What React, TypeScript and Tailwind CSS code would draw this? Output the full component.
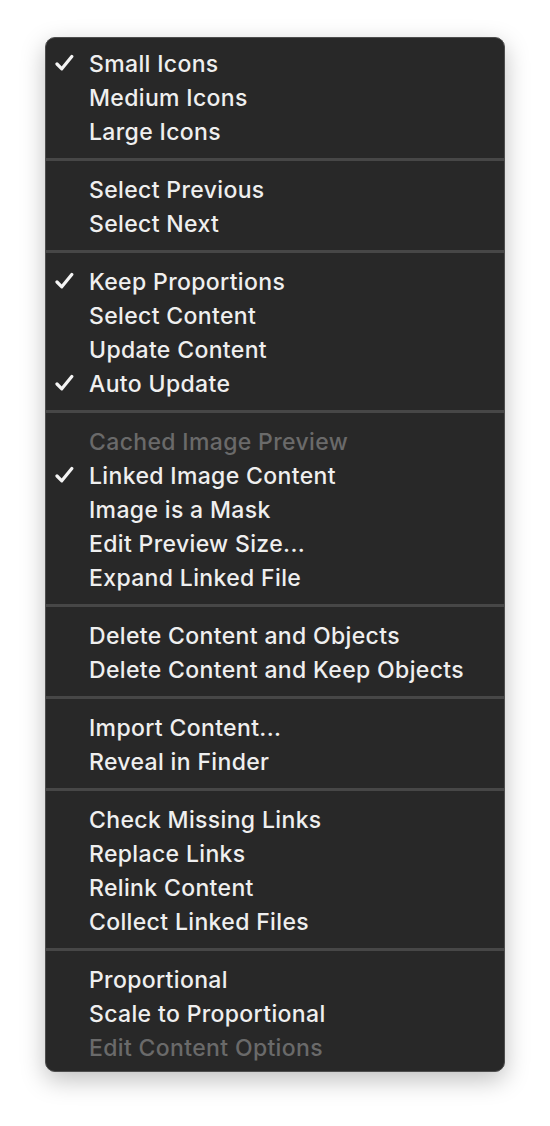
type Item = { label: string; checked?: boolean; disabled?: boolean };

const groups: Item[][] = [
  [{ label: "Small Icons", checked: true }, { label: "Medium Icons" }, { label: "Large Icons" }],
  [{ label: "Select Previous" }, { label: "Select Next" }],
  [
    { label: "Keep Proportions", checked: true },
    { label: "Select Content" },
    { label: "Update Content" },
    { label: "Auto Update", checked: true },
  ],
  [
    { label: "Cached Image Preview", disabled: true },
    { label: "Linked Image Content", checked: true },
    { label: "Image is a Mask" },
    { label: "Edit Preview Size..." },
    { label: "Expand Linked File" },
  ],
  [{ label: "Delete Content and Objects" }, { label: "Delete Content and Keep Objects" }],
  [{ label: "Import Content..." }, { label: "Reveal in Finder" }],
  [
    { label: "Check Missing Links" },
    { label: "Replace Links" },
    { label: "Relink Content" },
    { label: "Collect Linked Files" },
  ],
  [
    { label: "Proportional" },
    { label: "Scale to Proportional" },
    { label: "Edit Content Options", disabled: true },
  ],
];

function Check() {
  return (
    <svg width="19" height="18" viewBox="0 0 19 18" className="block">
      <path d="M2 10 L6.8 14.8 L16.8 2.5" fill="none" stroke="#f4f4f4" strokeWidth="3.2" strokeLinecap="round" strokeLinejoin="round" />
    </svg>
  );
}

export default function App() {
  return (
    <div className="w-[550px] h-[1126px] bg-white pt-[37px] pl-[45px]" style={{ fontFamily: "Inter, 'Noto Sans', sans-serif" }}>
      <div className="w-[460px] rounded-[10px] bg-[#282828] border border-[#4e4e4e] pt-[8px] pb-[7px] shadow-[0_8px_24px_rgba(0,0,0,0.25)]">
        {groups.map((g, gi) => (
          <div key={gi}>
            {gi > 0 && <div className="mt-[10px] mb-[11px] h-[3px] bg-[#474747]"></div>}
            {g.map((it) => (
              <div key={it.label} className="flex items-center h-[34px]">
                <div className="w-[43px] pl-[9px] flex items-center">{it.checked && <Check />}</div>
                <span className={"pt-[2px] text-[23px] font-medium tracking-[0.35px] leading-none " + (it.disabled ? "text-[#6a6a6a]" : "text-[#efefef]")}>
                  {it.label}
                </span>
              </div>
            ))}
          </div>
        ))}
      </div>
    </div>
  );
}
